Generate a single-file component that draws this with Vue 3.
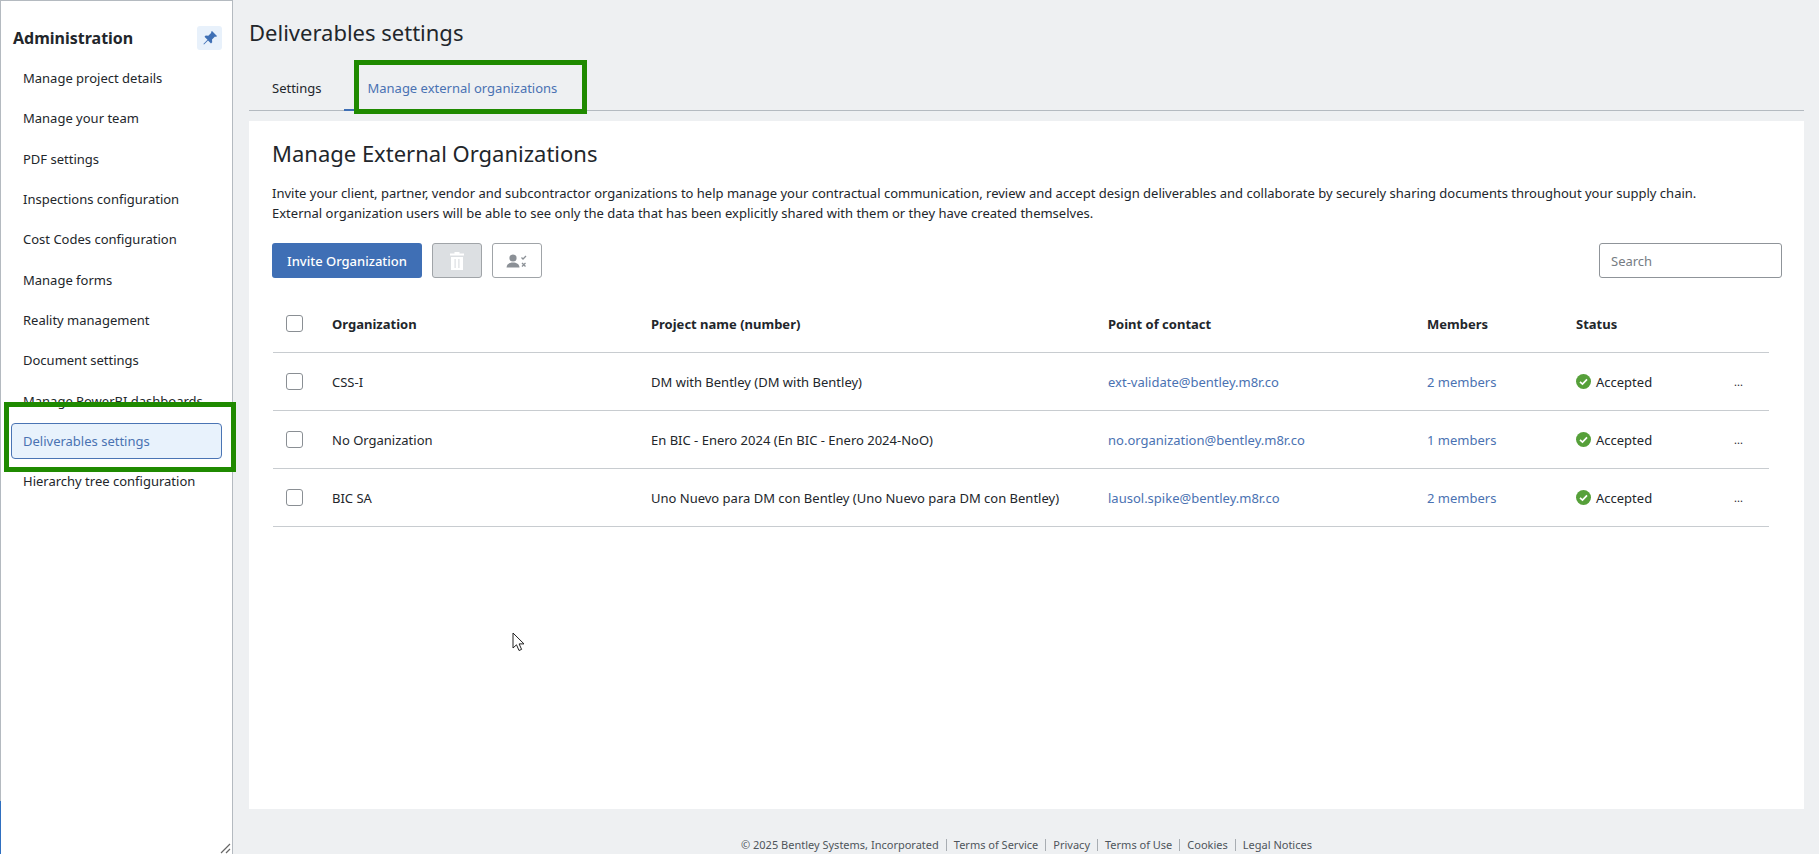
<script setup>
const navItems = [
  'Manage project details',
  'Manage your team',
  'PDF settings',
  'Inspections configuration',
  'Cost Codes configuration',
  'Manage forms',
  'Reality management',
  'Document settings',
  'Manage PowerBI dashboards',
  'Deliverables settings',
  'Hierarchy tree configuration',
]

const rows = [
  { org: 'CSS-I', project: 'DM with Bentley (DM with Bentley)', email: 'ext-validate@bentley.m8r.co', members: '2 members' },
  { org: 'No Organization', project: 'En BIC - Enero 2024 (En BIC - Enero 2024-NoO)', email: 'no.organization@bentley.m8r.co', members: '1 members' },
  { org: 'BIC SA', project: 'Uno Nuevo para DM con Bentley (Uno Nuevo para DM con Bentley)', email: 'lausol.spike@bentley.m8r.co', members: '2 members' },
]

const footerLinks = ['© 2025 Bentley Systems, Incorporated', 'Terms of Service', 'Privacy', 'Terms of Use', 'Cookies', 'Legal Notices']
</script>

<template>
  <div class="page">
    <aside class="sidebar">
      <div class="side-head">
        <span class="side-title">Administration</span>
        <button class="pin">
          <svg width="16" height="16" viewBox="0 0 16 16"><path fill="#3f70b5" d="M10 1l5 5-1 1-1-.4-3 3 .2 2.6-1.2 1.2-3-3L2 14.5l-.6-.6L5.500 9.800l-3-3L3.700 5.600l2.600.2 3-3L9 2z"/></svg>
        </button>
      </div>
      <nav class="nav">
        <a v-for="item in navItems" :key="item" class="nav-item" :class="{ active: item === 'Deliverables settings' }">{{ item }}</a>
      </nav>
      <div class="mark mark-nav"></div>
      <span class="edge"></span>
      <svg class="grip" width="12" height="12" viewBox="0 0 12 12"><path d="M1 11L10 2M6 11l4-4" stroke="#666" stroke-width="1.200" fill="none"/></svg>
    </aside>

    <main class="main">
      <h1 class="page-title">Deliverables settings</h1>
      <div class="tabs">
        <span class="tab">Settings</span>
        <span class="tab current">Manage external organizations</span>
        <div class="mark mark-tab"></div>
      </div>

      <section class="card">
        <h2 class="card-title">Manage External Organizations</h2>
        <p class="intro">
          Invite your client, partner, vendor and subcontractor organizations to help manage your contractual communication, review and accept design deliverables and collaborate by securely sharing documents throughout your supply chain.<br>
          External organization users will be able to see only the data that has been explicitly shared with them or they have created themselves.
        </p>

        <div class="toolbar">
          <button class="btn primary">Invite Organization</button>
          <button class="btn icon disabled">
            <svg width="16" height="20" viewBox="0 0 16 20"><path fill="#fff" d="M5.500 1h5v1.500H15V4.500H1V2.500h4.500zM2 6h12v13H2zM5.500 8v9h1.200V8zm3.800 0v9h1.200V8z"/></svg>
          </button>
          <button class="btn icon">
            <svg width="22" height="16" viewBox="0 0 22 16">
              <circle cx="7" cy="5" r="3.600" fill="#8b9096"/>
              <path fill="#8b9096" d="M0.500 14.500c.3-3.600 3-5 6.500-5s6.200 1.400 6.500 5z"/>
              <path d="M15.500 4.500l1.500 1.500 3-3M16 10l3.500 3.500M19.500 10L16 13.500" stroke="#8b9096" stroke-width="1.300" fill="none"/>
            </svg>
          </button>
          <input class="search" type="text" placeholder="Search">
        </div>

        <div class="table">
          <div class="row head">
            <span class="check"></span>
            <span>Organization</span>
            <span>Project name (number)</span>
            <span>Point of contact</span>
            <span>Members</span>
            <span>Status</span>
            <span></span>
          </div>
          <div v-for="r in rows" :key="r.org" class="row">
            <span class="check"></span>
            <span>{{ r.org }}</span>
            <span>{{ r.project }}</span>
            <a class="link">{{ r.email }}</a>
            <a class="link">{{ r.members }}</a>
            <span class="status">
              <svg width="15" height="15" viewBox="0 0 15 15">
                <circle cx="7.500" cy="7.500" r="7.500" fill="#56a03a"/>
                <path d="M4 7.800l2.500 2.300L11 5.400" stroke="#fff" stroke-width="1.700" fill="none"/>
              </svg>
              Accepted
            </span>
            <span class="more">...</span>
          </div>
        </div>
      </section>

      <footer class="footer">
        <span v-for="link in footerLinks" :key="link" class="foot-item">{{ link }}</span>
      </footer>
    </main>

    <svg class="cursor" width="14" height="20" viewBox="0 0 14 20">
      <path d="M1 1v15l3.500-3.200 2.500 5.700 2.600-1.100-2.500-5.500H12z" fill="#fff" stroke="#222" stroke-width="1"/>
    </svg>
  </div>
</template>

<style>
html, body {
  margin: 0;
  background: #eef0f2;
}
</style>

<style scoped>
.page {
  position: relative;
  display: flex;
  height: 854px;
  overflow: hidden;
  font-family: "Noto Sans", "Liberation Sans", sans-serif;
  font-size: 13px;
  color: #22262b;
}

.sidebar {
  position: relative;
  flex: 0 0 233px;
  box-sizing: border-box;
  background: #fff;
  border-left: 1px solid #b4bac0;
  border-top: 1px solid #b4bac0;
  border-right: 1px solid #b4bac0;
}

.side-head {
  display: flex;
  align-items: center;
  justify-content: space-between;
  height: 40px;
  margin-top: 17px;
  padding: 0 10px 0 12px;
}

.side-title {
  font-size: 16px;
  font-weight: 700;
}

.pin {
  display: flex;
  align-items: center;
  justify-content: center;
  width: 25px;
  height: 24px;
  padding: 0;
  border: 0;
  border-radius: 3px;
  background: #e8f1fb;
}

.nav {
  display: flex;
  flex-direction: column;
  padding: 0 10px;
}

.nav-item {
  display: flex;
  align-items: center;
  height: 40.300px;
  box-sizing: border-box;
  padding-left: 12px;
}

.nav-item.active {
  height: 36px;
  margin: 2px 0 2.300px;
  border: 1px solid #4a74b4;
  border-radius: 4px;
  background: #e8f2fc;
  color: #4a72b2;
  padding-left: 11px;
}

.mark {
  position: absolute;
  box-sizing: border-box;
  border: 5px solid #1f8a00;
}

.mark-nav {
  left: 3px;
  top: 401px;
  width: 232px;
  height: 70px;
}

.edge {
  position: absolute;
  left: -1px;
  top: 800px;
  width: 1px;
  height: 54px;
  background: #2f6fc0;
}

.grip {
  position: absolute;
  right: 0;
  bottom: 0;
}

.main {
  flex: 1;
  display: flex;
  flex-direction: column;
  min-width: 0;
  padding: 0 15px 0 16px;
  background: #eef0f2;
}

.page-title {
  margin: 16px 0 0;
  font-size: 22px;
  line-height: 32px;
  font-weight: 400;
}

.tabs {
  position: relative;
  display: flex;
  height: 63px;
  box-sizing: border-box;
  padding-top: 26px;
  border-bottom: 1px solid #b4bac0;
}

.tab {
  padding: 5px 23px 0;
  line-height: 18px;
}

.tab.current {
  color: #4a72b2;
  border-bottom: 2px solid #3f6fb5;
  margin-bottom: -1px;
}

.mark-tab {
  left: 105px;
  top: 12px;
  width: 233px;
  height: 54px;
}

.card {
  height: 688px;
  margin-top: 10px;
  box-sizing: border-box;
  padding: 16px 22px 0 23px;
  background: #fff;
}

.card-title {
  margin: 0;
  font-size: 22px;
  line-height: 32px;
  font-weight: 400;
}

.intro {
  margin: 14px 0 0;
  line-height: 20px;
  font-size: 13px;
  white-space: nowrap;
}

.toolbar {
  display: flex;
  align-items: center;
  gap: 10px;
  margin-top: 20px;
}

.btn {
  height: 35px;
  box-sizing: border-box;
  border-radius: 3px;
  font-family: inherit;
  font-size: 13px;
  padding: 0;
}

.primary {
  width: 150px;
  border: 0;
  background: #3f6fb5;
  color: #fff;
  font-weight: 500;
}

.icon {
  display: flex;
  align-items: center;
  justify-content: center;
  width: 50px;
  border: 1px solid #a0a4a8;
  background: #fff;
}

.disabled {
  background: #dcdfe2;
}

.search {
  margin-left: auto;
  width: 183px;
  height: 35px;
  box-sizing: border-box;
  padding: 0 11px;
  border: 1px solid #8f9499;
  border-radius: 3px;
  font-family: inherit;
  font-size: 13px;
  outline: none;
}

.search::placeholder {
  color: #767c83;
}

.table {
  width: 1496px;
  margin: 17px 0 0 1px;
}

.row {
  display: grid;
  grid-template-columns: 59px 319px 457px 319px 149px 158px 35px;
  align-items: center;
  height: 58px;
  box-sizing: border-box;
  border-bottom: 1px solid #c8ccd0;
}

.row.head {
  height: 58px;
  font-weight: 700;
}

.check {
  display: block;
  width: 17px;
  height: 17px;
  box-sizing: border-box;
  margin-left: 13px;
  border: 1px solid #8a8f94;
  border-radius: 3px;
}

.link {
  color: #4a72b2;
}

.status {
  display: flex;
  align-items: center;
  gap: 5px;
}

.more {
  font-size: 11px;
}

.footer {
  flex: 1;
  display: flex;
  align-items: center;
  justify-content: center;
  font-size: 11px;
  color: #4f555b;
  padding-top: 26px;
  box-sizing: border-box;
}

.foot-item {
  padding: 0 7px;
  line-height: 12px;
  border-left: 1px solid #a8adb2;
}

.foot-item:first-child {
  border-left: 0;
}

.cursor {
  position: absolute;
  left: 512px;
  top: 632px;
}
</style>
